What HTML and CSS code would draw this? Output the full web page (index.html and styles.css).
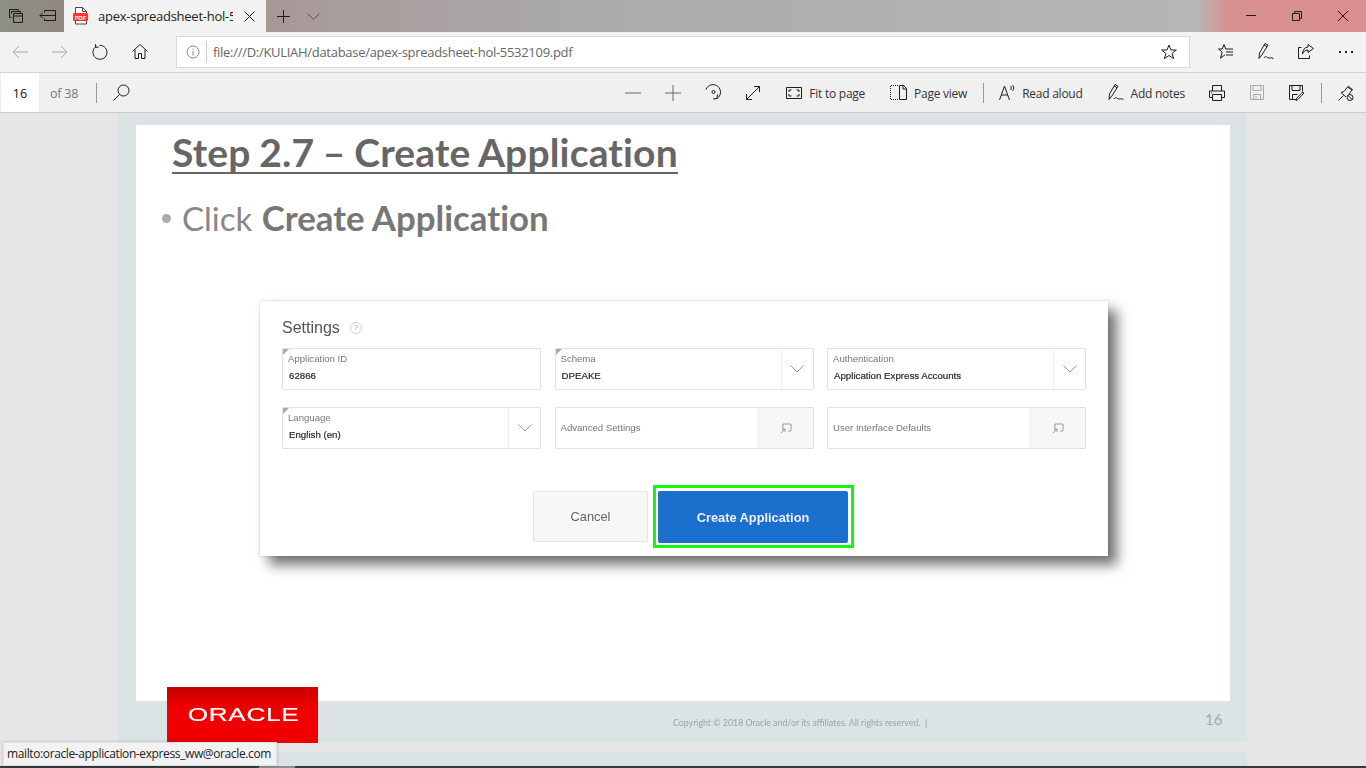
FILE: index.html
```html
<!DOCTYPE html>
<html>
<head>
  <title>apex-spreadsheet-hol-5532109.pdf</title>
  <link rel="stylesheet" href="styles.css">
</head>
<body>
  <div class="titlebar">
    <div class="tb-btn tb-first">
      <svg width="16" height="16" viewBox="0 0 16 16" class="ic"><path d="M1.500 4.500v-3h9v2M3.500 5.500v-2h9v2M1.500 1.500v8h2M5.500 5.500h9v9h-9zM5.500 8h9"/></svg>
    </div>
    <div class="tb-btn">
      <svg width="18" height="12" viewBox="0 0 18 12" class="ic"><path d="M5.500 2.500v-2h11v10h-11v-2M5.500 5.500h11M1 5.500h7M3.500 3l-2.500 2.500 2.500 2.500"/></svg>
    </div>
    <div class="tab">
      <svg width="16" height="18" viewBox="0 0 16 18"><path d="M2.500 .5h7l4 4v12.500h-11z" fill="#fff" stroke="#444"/><path d="M9.500 .5v4h4" fill="none" stroke="#444"/><rect x="0" y="6" width="15" height="8" rx="1" fill="#f33"/><text x="7.500" y="12.500" class="pdf-label">PDF</text></svg>
      <span class="tab-title">apex-spreadsheet-hol-5532109.pdf</span>
      <svg width="11" height="11" viewBox="0 0 11 11" class="ic"><path d="M.5 .5l10 10M10.500 .5l-10 10"/></svg>
    </div>
    <div class="tb-btn tb-plus">
      <svg width="13" height="13" viewBox="0 0 13 13" class="ic"><path d="M6.500 0v13M0 6.500h13"/></svg>
    </div>
    <div class="tb-btn tb-more">
      <svg width="13" height="7" viewBox="0 0 13 7" class="ic ic-soft"><path d="M.5 .5l6 6 6-6"/></svg>
    </div>
    <div class="win-btns">
      <div class="win-btn"><svg width="10" height="2" viewBox="0 0 10 2" class="ic"><path d="M0 .5h10"/></svg></div>
      <div class="win-btn"><svg width="10" height="10" viewBox="0 0 10 10" class="ic"><path d="M.5 2.500h7v7h-7zM2.500 2.500v-2h7v7h-2"/></svg></div>
      <div class="win-btn"><svg width="10" height="10" viewBox="0 0 10 10" class="ic"><path d="M0 0l10 10M10 0l-10 10"/></svg></div>
    </div>
  </div>

  <div class="navbar">
    <div class="nav-btn"><svg width="16" height="14" viewBox="0 0 16 14" class="ic ic-off"><path d="M16 7h-15M7 1l-6 6 6 6"/></svg></div>
    <div class="nav-btn"><svg width="16" height="14" viewBox="0 0 16 14" class="ic ic-off"><path d="M0 7h15M9 1l6 6-6 6"/></svg></div>
    <div class="nav-btn"><svg width="16" height="16" viewBox="0 0 16 16" class="ic"><path d="M4.500 2.200a7 7 0 1 0 3-.9M3.500 .2v3h3.200"/></svg></div>
    <div class="nav-btn"><svg width="16" height="15" viewBox="0 0 16 15" class="ic"><path d="M.5 7.500l7.500-7 7.500 7M3 5.500v9h3.500v-5h3v5h3.500v-9"/></svg></div>
    <div class="address">
      <svg width="14" height="14" viewBox="0 0 14 14" class="ic ic-info"><circle cx="7" cy="7" r="6"/><path d="M7 6v4.500M7 3.500v1.200"/></svg>
      <span class="addr-sep"></span>
      <span class="addr-text">file:///D:/KULIAH/database/apex-spreadsheet-hol-5532109.pdf</span>
      <svg class="ic addr-star" width="16" height="16" viewBox="0 0 16 16"><path d="M8 1l2 5h5.300l-4.300 3.400 1.700 5.300-4.700-3.200-4.700 3.200 1.700-5.300-4.300-3.400h5.300z"/></svg>
    </div>
    <div class="nav-btn nav-first"><svg width="16" height="15" viewBox="0 0 16 15" class="ic"><path d="M6 .5l1.700 4.500h7.300M6 .5l-1.700 4.500h-3.800l3.700 3.200-1.700 6 4.500-3.500M8 8h7M8 11h7"/></svg></div>
    <div class="nav-btn"><svg width="16" height="17" viewBox="0 0 16 17" class="ic"><path d="M1 15.500l.5-5.500 5.500-9.500 3 1.700-6 9.500zM6 2l3 1.700M6 15c1.500-2.500 2.500-1 4-.2s3-.8 5.500.7"/></svg></div>
    <div class="nav-btn"><svg width="16" height="15" viewBox="0 0 16 15" class="ic"><path d="M.5 3.500v11h11v-3M.5 3.500h3M10 .5l5.500 4-5.500 4v-2.500c-3 0-4.500 1.500-5.500 4 0-4 2-6.500 5.500-7z"/></svg></div>
    <div class="nav-btn nav-dots"><span></span><span></span><span></span></div>
  </div>

  <div class="pdfbar">
    <div class="page-num">16</div>
    <span class="page-of">of 38</span>
    <span class="bar-sep sep-search"></span>
    <svg class="ic search-ic" width="17" height="17" viewBox="0 0 17 17"><circle cx="10.500" cy="6.500" r="5.500"/><path d="M6.500 10.500l-6 6"/></svg>

    <div class="bar-right">
      <div class="tool"><svg width="16" height="2" viewBox="0 0 16 2" class="ic ic-mid"><path d="M0 1h16"/></svg></div>
      <div class="tool"><svg width="16" height="16" viewBox="0 0 16 16" class="ic ic-mid"><path d="M0 8h16M8 0v16"/></svg></div>
      <div class="tool"><svg width="17" height="18" viewBox="0 0 17 18" class="ic"><path d="M1 5.500a7.500 7.500 0 1 1 11 9M12.500 10.500l-.5 4-4 .5"/><circle cx="8.500" cy="8" r="1.500"/></svg></div>
      <div class="tool"><svg width="14" height="14" viewBox="0 0 14 14" class="ic"><path d="M.5 13.500l13-13M8 .5h5.500v5.500M.5 8v5.500h5.500"/></svg></div>
      <div class="tool-text tool-fit">
        <svg width="16" height="12" viewBox="0 0 16 12" class="ic"><path d="M.5 .5h15v11h-15zM3 5v-2h2.500M13 5v-2h-2.500M3 7v2h2.500M13 7v2h-2.500"/></svg>
        <span>Fit to page</span>
      </div>
      <div class="tool-text tool-view">
        <svg width="17" height="15" viewBox="0 0 17 15" class="ic"><path d="M8 .5h-7.500v14h7.500" stroke-dasharray="1 1"/><path d="M9.500 14.500v-14h4l3 3v11zM13 .5v3.500h3.500"/></svg>
        <span>Page view</span>
      </div>
      <span class="bar-sep"></span>
      <div class="tool-text tool-read">
        <svg width="16" height="15" viewBox="0 0 16 15" class="ic"><path d="M.5 15l5-14 5 14M2.500 10h6M11.500 1c1 1 1 3 0 4M13.500 0c1.700 1.700 1.700 4.300 0 6"/></svg>
        <span>Read aloud</span>
      </div>
      <div class="tool-text tool-notes">
        <svg width="16" height="17" viewBox="0 0 16 17" class="ic"><path d="M1 15.500l.5-5.500 5.500-9.500 3 1.700-6 9.500zM6 2l3 1.700M6 15c1.500-2.500 2.500-1 4-.2s3-.8 5.500.7"/></svg>
        <span>Add notes</span>
      </div>
      <div class="tool tool-print"><svg width="16" height="16" viewBox="0 0 16 16" class="ic"><path d="M3.500 6v-5.500h9v5.500M3.500 12.500h-3v-6.500h15v6.500h-3M3.500 9.500h9v6h-9zM2 8h1"/></svg></div>
      <div class="tool"><svg width="14" height="15" viewBox="0 0 14 15" class="ic ic-off"><path d="M.5 .5h13v14h-13zM3 .5v5h8v-5M3.500 14.500v-5h7v5M6 11v3.500"/></svg></div>
      <div class="tool"><svg width="16" height="16" viewBox="0 0 16 16" class="ic"><path d="M7 14.500h-6.500v-14h13v6M3 .5v5h8v-5M3.500 14.500v-5h5M15 8l-6 6.500-2 1 .7-2.300 6-6.200z"/></svg></div>
      <span class="bar-sep sep-last"></span>
      <div class="tool"><svg width="16" height="16" viewBox="0 0 16 16" class="ic"><path d="M.5 15.500l5-5M3 7.500l3-1 3.500-4.500 4.500 3-3 4M3 7.500l5 4.500M10 1l5 4"/><circle cx="12" cy="12.500" r="3"/><path d="M10 10.500l4 4"/></svg></div>
    </div>
  </div>

  <div class="viewer">
    <div class="pdf-page">
      <div class="slide">
        <h1>Step 2.7 – Create Application</h1>
        <p class="bullet"><span class="dot"></span><span>Click <b>Create Application</b></span></p>

        <div class="dialog">
          <h2>Settings <span class="help">?</span></h2>
          <div class="fields">
            <div class="field req">
              <div class="field-main"><label>Application ID</label><span>62866</span></div>
            </div>
            <div class="field req">
              <div class="field-main"><label>Schema</label><span>DPEAKE</span></div>
              <div class="addon addon-select"><svg width="14" height="8" viewBox="0 0 14 8" class="chev"><path d="M.5 .5l6.500 6.500 6.500-6.500"/></svg></div>
            </div>
            <div class="field">
              <div class="field-main"><label>Authentication</label><span>Application Express Accounts</span></div>
              <div class="addon addon-select"><svg width="14" height="8" viewBox="0 0 14 8" class="chev"><path d="M.5 .5l6.500 6.500 6.500-6.500"/></svg></div>
            </div>
            <div class="field req">
              <div class="field-main"><label>Language</label><span>English (en)</span></div>
              <div class="addon addon-select"><svg width="14" height="8" viewBox="0 0 14 8" class="chev"><path d="M.5 .5l6.500 6.500 6.500-6.500"/></svg></div>
            </div>
            <div class="field">
              <div class="field-main field-plain"><label>Advanced Settings</label></div>
              <div class="addon addon-open"><svg width="12" height="11" viewBox="0 0 12 11" class="chev"><path d="M3 6v-5h8v7h-3M1 10l4-4M2 6h3v3"/></svg></div>
            </div>
            <div class="field">
              <div class="field-main field-plain"><label>User Interface Defaults</label></div>
              <div class="addon addon-open"><svg width="12" height="11" viewBox="0 0 12 11" class="chev"><path d="M3 6v-5h8v7h-3M1 10l4-4M2 6h3v3"/></svg></div>
            </div>
          </div>
          <div class="actions">
            <button class="btn-cancel">Cancel</button>
            <div class="highlight"><button class="btn-create">Create Application</button></div>
          </div>
        </div>
      </div>
      <div class="page-footer">
        <span class="copy">Copyright © 2018 Oracle and/or its affiliates. All rights reserved. &nbsp;|</span>
        <span class="foot-num">16</span>
      </div>
      <div class="logo"><span>ORACLE</span></div>
    </div>
    <div class="pdf-page next-page"></div>
  </div>

  <div class="taskbar"><span class="task-gap"></span></div>
  <div class="status-tip">mailto:oracle-application-express_ww@oracle.com</div>
</body>
</html>
```

FILE: styles.css
```css
* {
  box-sizing: border-box;
}
html, body {
  margin: 0;
  height: 100%;
  overflow: hidden;
}
body {
  font-family: "Open Sans", "Noto Sans", sans-serif;
  display: flex;
  flex-direction: column;
  height: 768px;
  background: #e6e6e6;
  position: relative;
}
svg {
  display: block;
  flex: none;
}
.ic {
  fill: none;
  stroke: #1c1c1c;
  stroke-width: 1;
}
.ic-soft { stroke: #555; }
.ic-off { stroke: #a8a8a8; }
.ic-mid { stroke: #666; }
.ic-info { stroke: #888; }
.pdf-label {
  font-family: "Liberation Sans", sans-serif;
  font-size: 5.5px;
  font-weight: 700;
  fill: #fff;
  text-anchor: middle;
}

/* title bar */
.titlebar {
  height: 32px;
  display: flex;
  align-items: center;
  background: linear-gradient(90deg, #8e8f86 0, #92877f 70px, #a89a9a 300px, #ababab 600px, #b6b6b6 1198px, #d99090 1228px, #d98f8f 100%);
}
.tb-btn {
  width: 32px;
  height: 32px;
  display: flex;
  align-items: center;
  justify-content: center;
}
.tb-first { width: 32px; }
.tab {
  width: 202px;
  height: 32px;
  background: #f2f2f2;
  display: flex;
  align-items: center;
  padding-left: 9px;
}
.tab-title {
  width: 135px;
  margin-left: 9px;
  margin-right: 11px;
  font-size: 13px;
  color: #222;
  white-space: nowrap;
  overflow: hidden;
  letter-spacing: -0.25px;
}
.tb-plus { margin-left: 1px; }
.tb-more { margin-left: -2px; }
.win-btns {
  margin-left: auto;
  display: flex;
}
.win-btn {
  width: 46px;
  height: 32px;
  display: flex;
  align-items: center;
  justify-content: center;
}

/* address row */
.navbar {
  height: 41px;
  display: flex;
  align-items: center;
  background: #f2f2f2;
  border-bottom: 1px solid #d0d0d0;
  padding-bottom: 1px;
}
.nav-btn {
  width: 40px;
  height: 32px;
  display: flex;
  align-items: center;
  justify-content: center;
}
.nav-first { margin-left: 16px; }
.nav-dots { gap: 4px; }
.nav-dots span {
  width: 2px;
  height: 2px;
  background: #222;
}
.address {
  width: 1014px;
  height: 32px;
  margin-left: 16px;
  background: #fff;
  border: 1px solid #d9d9d9;
  display: flex;
  align-items: center;
  padding-left: 9px;
}
.addr-sep {
  width: 1px;
  height: 22px;
  background: #ccc;
  margin-left: 6px;
  margin-right: 6px;
}
.addr-text {
  font-size: 13px;
  color: #666;
  letter-spacing: -0.29px;
}
.addr-star { margin-left: auto; margin-right: 12px; }

/* pdf toolbar */
.pdfbar {
  height: 40px;
  display: flex;
  align-items: center;
  background: #f0f0f0;
  border-bottom: 1px solid #ccc;
  font-size: 12px;
  color: #333;
}
.page-num {
  width: 38px;
  height: 39px;
  margin-left: 1px;
  padding-top: 1px;
  background: #fff;
  display: flex;
  align-items: center;
  justify-content: center;
  font-size: 12.5px;
  color: #111;
}
.page-of {
  margin-left: 11px;
  margin-top: 1px;
  color: #777;
  font-size: 12.5px;
  letter-spacing: -0.2px;
}
.bar-sep {
  width: 1px;
  height: 20px;
  background: #999;
  margin: 0 5px;
}
.sep-search { margin-left: 18px; margin-right: 16px; }
.bar-right {
  margin-left: auto;
  display: flex;
  align-items: center;
}
.tool {
  width: 40px;
  height: 39px;
  display: flex;
  align-items: center;
  justify-content: center;
}
.tool-text {
  display: flex;
  align-items: center;
  height: 39px;
  letter-spacing: -0.25px;
}
.tool-text span { margin-top: 1px; }
.tool-fit { margin-left: 13px; gap: 7px; }
.tool-view { margin-left: 25px; margin-right: 11px; gap: 7px; }
.tool-read { margin-left: 10px; gap: 7px; }
.tool-notes { margin-left: 25px; gap: 7px; }
.tool-print { margin-left: 12px; }
.sep-last { margin: 0 4px; }

/* pdf pages */
.viewer {
  flex: 1;
  display: flex;
  flex-direction: column;
  padding-left: 118px;
  gap: 10px;
  overflow: hidden;
}
.pdf-page {
  width: 1129px;
  height: 629px;
  flex: none;
  background: #dbe3e5;
  padding: 12px 17px 0 18px;
  position: relative;
}
.next-page {
  height: 14px;
  padding: 0;
}
.slide {
  height: 576px;
  background: #fff;
  padding: 3px 0 0 36px;
  overflow: hidden;
}
h1 {
  margin: 0;
  font-family: "Lato", sans-serif;
  font-size: 39px;
  font-weight: 700;
  line-height: 48px;
  color: #666;
  display: inline-block;
  border-bottom: 2px solid #666;
  height: 46px;
  font-variant-ligatures: none;
  word-spacing: -1px;
  letter-spacing: 0.17px;
}
.bullet {
  margin: 22px 0 0 -10px;
  font-family: "Lato", sans-serif;
  font-size: 33px;
  line-height: 44px;
  color: #888;
  display: flex;
  align-items: center;
  font-variant-ligatures: none;
}
.bullet b {
  color: #777;
  font-size: 34.800px;
  margin-left: 1px;
}
.dot {
  width: 9px;
  height: 9px;
  border-radius: 50%;
  background: #aaa;
  margin-right: 11px;
}

/* settings dialog screenshot */
.dialog {
  width: 848px;
  height: 255px;
  margin: 61px 0 0 88px;
  padding: 17px 22px 0;
  background: #fff;
  box-shadow: 9px 9px 12px rgba(0,0,0,0.55), 0 0 2px rgba(0,0,0,0.2);
  font-family: "Liberation Sans", sans-serif;
  position: relative;
}
.dialog h2 {
  margin: 0;
  font-size: 16px;
  font-weight: 400;
  color: #555;
  line-height: 18px;
  height: 30px;
  display: flex;
  align-items: center;
  gap: 10px;
  padding-bottom: 11px;
  filter: blur(0.4px);
}
.help {
  width: 12px;
  height: 12px;
  border: 1px solid #ccc;
  border-radius: 50%;
  font-size: 8px;
  line-height: 10px;
  text-align: center;
  color: #aaa;
}
.fields {
  display: grid;
  grid-template-columns: 259px 259px 259px;
  grid-auto-rows: 42px;
  column-gap: 13.5px;
  row-gap: 17px;
}
.field {
  display: flex;
  border: 1px solid #e2e2e2;
  border-radius: 2px;
  background: #fff;
  position: relative;
  box-shadow: 0 0 1px rgba(0,0,0,0.1);
}
.req::before {
  content: "";
  position: absolute;
  left: 0;
  top: 0;
  border-top: 6px solid #aaa;
  border-right: 6px solid transparent;
}
.field-main {
  flex: 1;
  padding: 4px 5px 0;
  display: flex;
  flex-direction: column;
  filter: blur(0.45px);
}
.field-main label {
  font-size: 9.600px;
  line-height: 12px;
  color: #777;
}
.field-main span {
  font-size: 9.700px;
  line-height: 12px;
  margin-top: 5px;
  margin-left: 1px;
  color: #222;
  -webkit-text-stroke: 0.2px #333;
}
.field-plain {
  justify-content: center;
  padding-top: 0;
}
.addon {
  display: flex;
  align-items: center;
  justify-content: center;
  border-left: 1px solid #eee;
}
.addon-select { width: 32px; }
.addon-open {
  width: 55px;
  background: #f7f7f7;
}
.chev {
  fill: none;
  stroke: #999;
  stroke-width: 1;
}
.actions {
  display: flex;
  align-items: center;
  margin-top: 36px;
  margin-left: 251px;
}
.actions button {
  font-family: "Liberation Sans", sans-serif;
  font-size: 12.800px;
  border-radius: 2px;
  filter: blur(0.4px);
}
.btn-cancel {
  width: 115px;
  height: 51px;
  background: #f7f7f7;
  border: 1px solid #e5e5e5;
  color: #666;
  margin-right: 5px;
}
.highlight {
  width: 201px;
  height: 63px;
  border: 3px solid #14f514;
  padding: 3px 3px 2px 2px;
  background: #fff;
}
.btn-create {
  display: block;
  width: 190px;
  height: 52px;
  border: 0;
  background: #1a70cc;
  color: #eef;
  font-weight: 700;
}

/* page footer */
.page-footer {
  display: flex;
  align-items: center;
  height: 41px;
  padding-left: 537px;
}
.copy {
  font-family: "Lato", sans-serif;
  font-size: 8.800px;
  color: #9aa3a6;
  filter: blur(0.3px);
  white-space: nowrap;
  margin-top: 1px;
  width: 532px;
}
.foot-num {
  font-family: "Lato", sans-serif;
  font-size: 15px;
  color: #a3abae;
  margin-top: -6px;
}
.logo {
  position: absolute;
  left: 49px;
  top: 574px;
  width: 151px;
  height: 56px;
  background: linear-gradient(180deg, #c80000 0, #f00000 40%, #f00000 100%);
  display: flex;
  align-items: center;
  justify-content: center;
  padding-left: 3px;
  padding-top: 1px;
}
.logo span {
  font-family: "Liberation Sans", sans-serif;
  font-size: 18px;
  color: #fff;
  -webkit-text-stroke: 0.2px #fff;
  letter-spacing: 0.5px;
  transform: scaleX(1.45);
  display: block;
}

/* bottom edge */
.taskbar {
  height: 2px;
  flex: none;
  background: #333b3d;
  padding-left: 259px;
}
.task-gap {
  display: block;
  width: 36px;
  height: 2px;
  background: #8a8f90;
}
.status-tip {
  position: absolute;
  left: 3px;
  top: 742px;
  width: 274px;
  height: 24px;
  padding-left: 3px;
  background: #f2f2f2;
  border: 1px solid #e2e2e2;
  box-shadow: 0 0 3px rgba(0,0,0,0.2);
  font-size: 12px;
  line-height: 22px;
  color: #222;
  white-space: nowrap;
  letter-spacing: -0.38px;
}
```
